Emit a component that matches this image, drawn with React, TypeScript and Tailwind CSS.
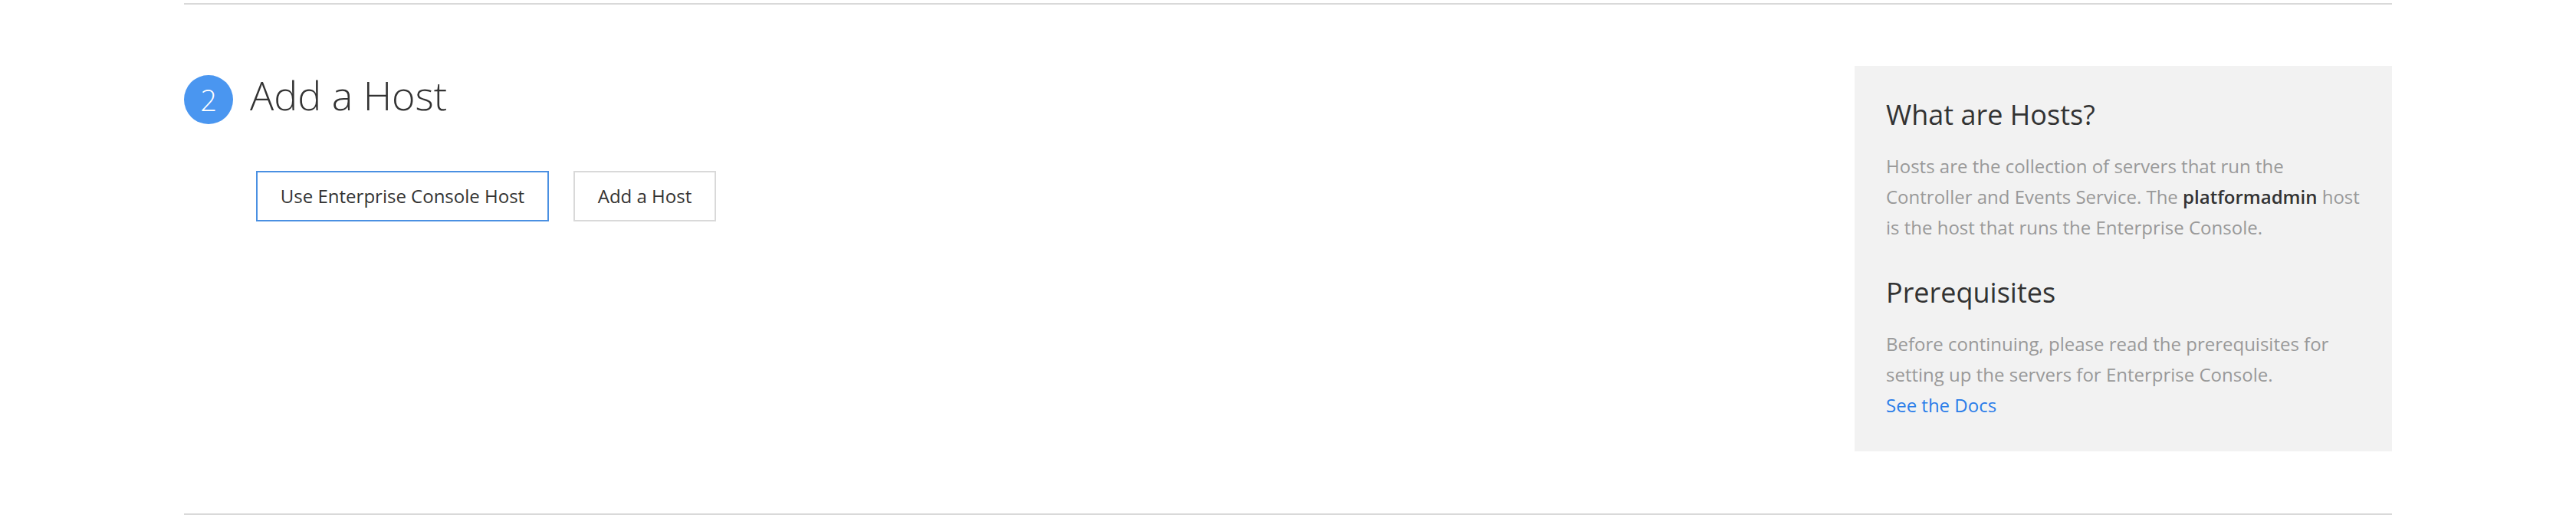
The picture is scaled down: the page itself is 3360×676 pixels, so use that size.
const font = { fontFamily: '"Open Sans", "Liberation Sans", sans-serif' };

function StepHeader() {
  return (
    <div className="flex items-start gap-[22px]">
      <div className="flex h-16 w-16 shrink-0 items-center justify-center rounded-full bg-[#4a96f0] text-[38px] font-light leading-none text-white">
        2
      </div>
      <h2 className="text-[52px] font-light leading-none text-[#333333]">Add a Host</h2>
    </div>
  );
}

function HostButtons() {
  return (
    <div className="ml-[94px] mt-[61px] flex gap-8">
      <button className="flex h-[66px] w-[382px] items-center justify-center border-2 border-[#4a90e2] bg-white text-[24px] text-[#333333]">
        Use Enterprise Console Host
      </button>
      <button className="flex h-[66px] w-[186px] items-center justify-center border-2 border-[#d9d9d9] bg-white text-[24px] text-[#333333]">
        Add a Host
      </button>
    </div>
  );
}

function InfoPanel() {
  return (
    <aside className="mt-[80px] w-[701px] shrink-0 self-start bg-[#f2f2f2] pb-[40px] pl-[41px] pr-[30px] pt-[42px]">
      <h3 className="text-[36px] leading-[44px] text-[#333333]">What are Hosts?</h3>
      <p className="mt-[25px] whitespace-nowrap text-[24px] leading-[40px] text-[#999999]">
        Hosts are the collection of servers that run the
        <br />
        Controller and Events Service. The <span className="font-semibold text-[#333333]">platformadmin</span> host
        <br />
        is the host that runs the Enterprise Console.
      </p>
      <h3 className="mt-[43px] text-[36px] leading-[44px] text-[#333333]">Prerequisites</h3>
      <p className="mt-[25px] whitespace-nowrap text-[24px] leading-[40px] text-[#999999]">
        Before continuing, please read the prerequisites for
        <br />
        setting up the servers for Enterprise Console.
        <br />
        <a href="#" className="text-[#2b7de9]">
          See the Docs
        </a>
      </p>
    </aside>
  );
}

export default function App() {
  return (
    <div className="h-[676px] w-full bg-white pt-[4px]" style={font}>
      <div className="mx-[240px] flex h-[668px] justify-between border-y-2 border-[#d9d9d9]">
        <section className="pt-[92px]">
          <StepHeader />
          <HostButtons />
        </section>
        <InfoPanel />
      </div>
    </div>
  );
}
